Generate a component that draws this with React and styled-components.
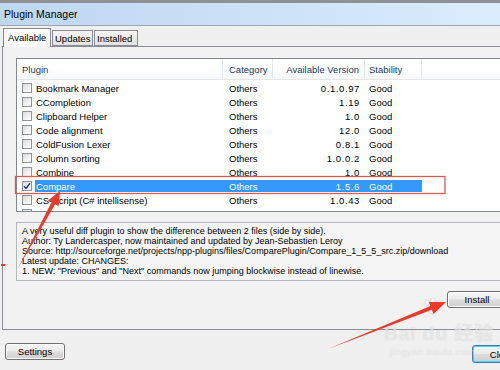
import React from "react";
import styled, { createGlobalStyle } from "styled-components";

const Global = createGlobalStyle`
  html, body { margin: 0; padding: 0; background: #f0f0f0; }
  body { font-family: "Liberation Sans", Arial, sans-serif; }
`;

const Window = styled.div`
  position: relative;
  width: 500px;
  height: 370px;
  overflow: hidden;
  background: #f0f0f0;
  display: flex;
  flex-direction: column;
`;

const TitleBar = styled.div`
  height: 22px;
  border-top: 3px solid #8d9196;
  border-bottom: 1px solid #98a8b8;
  background: linear-gradient(90deg, #bfd8f0 0%, #c9e0f6 45%, #d3e7fa 75%, #dbecfc 100%);
  display: flex;
  align-items: center;
  padding-left: 4px;
  font-size: 10.5px;
  color: #000;
`;

const Content = styled.div`
  padding: 2px 0 0 2px;
`;

const TabStrip = styled.div`
  display: flex;
  align-items: flex-end;
  height: 18px;
  padding-left: 1px;
`;

const Tab = styled.div`
  position: relative;
  box-sizing: border-box;
  width: ${p => p.$w}px;
  height: ${p => (p.$active ? 19 : 16)}px;
  margin-bottom: ${p => (p.$active ? -1 : 0)}px;
  margin-right: 1px;
  border: 1px solid #898c95;
  border-bottom: ${p => (p.$active ? "none" : "1px solid #898c95")};
  background: ${p => (p.$active ? "#fbfbfb" : "linear-gradient(#f4f4f4, #e3e3e3)")};
  font-size: 9.5px;
  display: flex;
  align-items: center;
  padding-left: ${p => (p.$active ? 4 : 2)}px;
  padding-bottom: ${p => (p.$active ? 2 : 0)}px;
  z-index: ${p => (p.$active ? 2 : 1)};
  color: #000;
`;

const Panel = styled.div`
  box-sizing: border-box;
  width: 520px;
  height: 284px;
  border: 1px solid #898c95;
  border-right: none;
  background: #f2f2f2;
  padding: 11px 15px 0 13px;
  display: flex;
  flex-direction: column;
`;

const ListView = styled.div`
  box-sizing: border-box;
  height: 154px;
  border: 1px solid #828790;
  background: #fff;
  overflow: hidden;
`;

const cols = "206px 50px 92px 57px 1fr";

const HeaderRow = styled.div`
  display: grid;
  grid-template-columns: ${cols};
  height: 20px;
  margin-bottom: 1px;
  background: linear-gradient(#ffffff, #ffffff 50%, #f7f8fa);
  border-bottom: 1px solid #e5e5e5;
`;

const HeaderCell = styled.div`
  display: flex;
  align-items: center;
  justify-content: ${p => (p.$right ? "flex-end" : "flex-start")};
  padding: ${p => (p.$right ? "0 5px 0 0" : `0 0 0 ${p.$pl ?? 5}px`)};
  font-size: 9.5px;
  color: #1e395b;
  border-right: ${p => (p.$last ? "none" : "1px solid #e3e8ef")};
  white-space: nowrap;
`;

const Row = styled.div`
  display: grid;
  grid-template-columns: ${cols};
  height: 14px;
  font-size: 9.5px;
  color: #000;
`;

const NameCell = styled.div`
  display: flex;
  align-items: center;
  padding-left: 5px;
  white-space: nowrap;
`;

const Label = styled.div`
  flex: 1;
  height: 12px;
  display: flex;
  align-items: center;
  margin-left: 3px;
  padding-left: 1px;
  background: ${p => (p.$sel ? "#3399ff" : "transparent")};
  color: ${p => (p.$sel ? "#fff" : "#000")};
`;

const Cell = styled.div`
  align-self: center;
  height: 12px;
  display: flex;
  align-items: center;
  justify-content: ${p => (p.$right ? "flex-end" : "flex-start")};
  padding: ${p => (p.$right ? "0 5px 0 0" : `0 0 0 ${p.$pl}px`)};
  background: ${p => (p.$sel ? "#3399ff" : "transparent")};
  color: ${p => (p.$sel ? "#fff" : "#000")};
  white-space: nowrap;
  letter-spacing: ${p => (p.$right ? "0.6px" : "0")};
`;

const Box = styled.div`
  box-sizing: border-box;
  width: 10px;
  height: 10px;
  border: 1px solid #8f9296;
  background: linear-gradient(135deg, #d8d9db, #f7f7f7 70%, #ffffff);
  display: flex;
  align-items: center;
  justify-content: center;
`;

const Desc = styled.div`
  box-sizing: border-box;
  margin-top: 10px;
  height: 59px;
  border: 1px solid #b4b7bc;
  background: #f5f5f5;
  padding: 3px 5px;
  font-size: 9px;
  line-height: 10px;
  color: #000;
  white-space: nowrap;
  overflow: hidden;
`;

const ButtonRow = styled.div`
  display: flex;
  justify-content: flex-end;
  margin-top: 10px;
`;

const Button = styled.div`
  box-sizing: border-box;
  width: 60px;
  height: ${p => p.$h || 17}px;
  margin-top: ${p => p.$mt || 0}px;
  border: 1px solid ${p => (p.$focus ? "#3c7fb1" : "#707070")};
  border-radius: 3px;
  background: linear-gradient(#f6f6f6 0%, #ebebeb 48%, #dddddd 52%, #cfcfcf 100%);
  box-shadow: inset 0 0 0 1px ${p => (p.$focus ? "#48d3f5" : "#fcfcfc")};
  display: flex;
  align-items: center;
  justify-content: center;
  font-size: 9.5px;
  color: #000;
`;

const Footer = styled.div`
  display: flex;
  justify-content: space-between;
  align-items: flex-start;
  width: 527px;
  padding: 13px 0 0 5px;
`;

const Overlay = styled.svg`
  position: absolute;
  left: 0;
  top: 0;
  pointer-events: none;
`;

const Watermark = styled.div`
  position: absolute;
  left: 384px;
  top: 318px;
  color: rgba(255, 255, 255, 0.45);
  text-shadow: 0 0 1px rgba(170, 170, 170, 0.45);
  font-family: "Liberation Sans", "Noto Sans CJK SC", sans-serif;
  pointer-events: none;
`;

const WmBig = styled.div`
  font-size: 19px;
  font-weight: bold;
  letter-spacing: 1px;
`;

const WmSmall = styled.div`
  font-size: 9.5px;
  margin-top: 1px;
  margin-left: 6px;
  letter-spacing: 0.5px;
`;

const plugins = [
  ["Bookmark Manager", "0.1.0.97"],
  ["CCompletion", "1.19"],
  ["Clipboard Helper", "1.0"],
  ["Code alignment", "12.0"],
  ["ColdFusion Lexer", "0.8.1"],
  ["Column sorting", "1.0.0.2"],
  ["Combine", "1.0"],
  ["Compare", "1.5.6", true],
  ["CS-Script (C# intellisense)", "1.0.43"],
  ["Customize Toolbar", "4.0"],
];

function Check({ on }) {
  return (
    <Box>
      {on && (
        <svg width="8" height="8" viewBox="0 0 8 8">
          <path d="M1 4.2 L3 6.4 L7 1.2" fill="none" stroke="#1d3f8f" strokeWidth="1.5" />
        </svg>
      )}
    </Box>
  );
}

export default function App() {
  return (
    <Window>
      <Global />
      <TitleBar>Plugin Manager</TitleBar>
      <Content>
        <TabStrip>
          <Tab $active $w={48}>Available</Tab>
          <Tab $w={41}>Updates</Tab>
          <Tab $w={44}>Installed</Tab>
        </TabStrip>
        <Panel>
          <ListView>
            <HeaderRow>
              <HeaderCell $pl={5}>Plugin</HeaderCell>
              <HeaderCell $pl={6}>Category</HeaderCell>
              <HeaderCell $right>Available Version</HeaderCell>
              <HeaderCell $pl={4}>Stability</HeaderCell>
              <HeaderCell $last />
            </HeaderRow>
            {plugins.map(([name, ver, sel]) => (
              <Row key={name}>
                <NameCell>
                  <Check on={sel} />
                  <Label $sel={sel}>{name}</Label>
                </NameCell>
                <Cell $pl={6} $sel={sel}>Others</Cell>
                <Cell $right $sel={sel}>{ver}</Cell>
                <Cell $pl={4} $sel={sel}>Good</Cell>
                <div />
              </Row>
            ))}
          </ListView>
          <Desc>
            <div>A very useful diff plugin to show the difference between 2 files (side by side).</div>
            <div>Author: Ty Landercasper, now maintained and updated by Jean-Sebastien Leroy</div>
            <div>Source: http://sourceforge.net/projects/npp-plugins/files/ComparePlugin/Compare_1_5_5_src.zip/download</div>
            <div>Latest update: CHANGES:</div>
            <div>1. NEW: "Previous" and "Next" commands now jumping blockwise instead of linewise.</div>
          </Desc>
          <ButtonRow>
            <Button>Install</Button>
          </ButtonRow>
        </Panel>
      </Content>
      <Footer>
        <Button>Settings</Button>
        <Button $focus $h={18} $mt={2}>Close</Button>
      </Footer>

      <Watermark>
        <WmBig>Bai du 经验</WmBig>
        <WmSmall>jingyan.baidu.com</WmSmall>
      </Watermark>

      <Overlay width="500" height="370" viewBox="0 0 500 370">
        <g fill="rgba(255,255,255,0.45)" stroke="rgba(170,170,170,0.4)" strokeWidth="0.8">
          <ellipse cx="427" cy="303" rx="2.2" ry="3" />
          <ellipse cx="433" cy="301" rx="2.2" ry="3" />
          <ellipse cx="439" cy="303" rx="2.2" ry="3" />
          <ellipse cx="433" cy="310" rx="5" ry="4" />
        </g>
        <rect x="15.5" y="176.5" width="429.5" height="17" fill="none" stroke="#d65a55" strokeWidth="1.3" />
        <polygon
          points="17,270 55.1,204.3 58.6,206.2 60,191 48,200.4 51.5,202.3"
          fill="#ea3a2c"
        />
        <rect x="1" y="264" width="4" height="2" fill="#ea3a2c" />
        <polygon
          points="328,349 431.8,309.8 433.5,313.9 446,302 428.7,301.9 430.4,306"
          fill="#ea3a2c"
        />
      </Overlay>
    </Window>
  );
}
